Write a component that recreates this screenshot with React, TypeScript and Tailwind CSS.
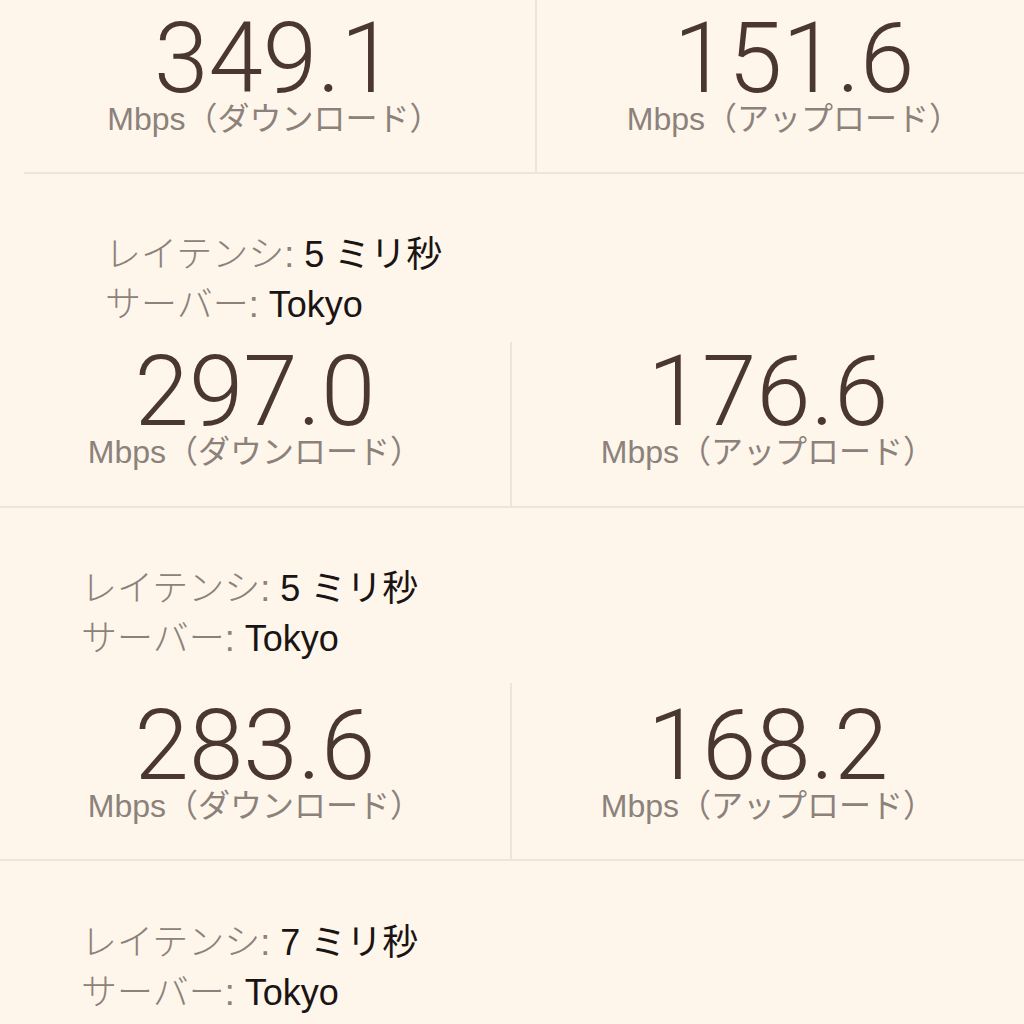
import React from "react";

const numCls =
  "text-[98px] leading-[84px] font-light text-[#4b3732] font-['Roboto','Liberation_Sans',sans-serif] whitespace-nowrap";
const unitCls =
  "text-[32px] leading-[36px] text-[#8c817b] font-['Liberation_Sans','Noto_Sans_CJK_JP',sans-serif] whitespace-nowrap";

function Cell({ value, unit }: { value: string; unit: string }) {
  return (
    <div className="flex flex-col items-center">
      <div className={numCls}>{value}</div>
      <div className={unitCls}>{unit}</div>
    </div>
  );
}

function Latency({ ms }: { ms: string }) {
  return (
    <div className="text-[36px] leading-[50px] font-['Liberation_Sans','Noto_Sans_CJK_JP',sans-serif] whitespace-nowrap">
      <div>
        <span className="text-[#8c817b] font-light">レイテンシ:</span>
        <span className="text-[#1a1414]"> {ms} ミリ秒</span>
      </div>
      <div>
        <span className="text-[#8c817b] font-light">サーバー:</span>
        <span className="text-[#1a1414]"> Tokyo</span>
      </div>
    </div>
  );
}

export default function App() {
  return (
    <div className="w-[1024px] h-[1024px] overflow-hidden bg-[#fef6ea]">
      {/* Section 1 */}
      <div className="flex w-[1051px]">
        <div className="w-[535px] pl-[14px] pt-[17px] pb-[35px]">
          <Cell value="349.1" unit="Mbps（ダウンロード）" />
        </div>
        <div className="w-[2px] bg-[#ede5dc]" />
        <div className="w-[514px] pt-[17px] pb-[35px]">
          <Cell value="151.6" unit="Mbps（アップロード）" />
        </div>
      </div>
      <div className="ml-[24px] h-[2px] bg-[#ede5dc]" />
      <div className="pl-[105px] pt-[56px] pb-[12px]">
        <Latency ms="5" />
      </div>

      {/* Section 2 */}
      <div className="flex">
        <div className="w-[510px] pt-[8px] pb-[36px]">
          <Cell value="297.0" unit="Mbps（ダウンロード）" />
        </div>
        <div className="w-[2px] bg-[#ede5dc]" />
        <div className="flex-1 pt-[8px] pb-[36px]">
          <Cell value="176.6" unit="Mbps（アップロード）" />
        </div>
      </div>
      <div className="h-[2px] bg-[#ede5dc]" />
      <div className="pl-[81px] pt-[56px] pb-[19px]">
        <Latency ms="5" />
      </div>

      {/* Section 3 */}
      <div className="flex">
        <div className="w-[510px] pt-[21px] pb-[35px]">
          <Cell value="283.6" unit="Mbps（ダウンロード）" />
        </div>
        <div className="w-[2px] bg-[#ede5dc]" />
        <div className="flex-1 pt-[21px] pb-[35px]">
          <Cell value="168.2" unit="Mbps（アップロード）" />
        </div>
      </div>
      <div className="h-[2px] bg-[#ede5dc]" />
      <div className="pl-[81px] pt-[57px]">
        <Latency ms="7" />
      </div>
    </div>
  );
}
